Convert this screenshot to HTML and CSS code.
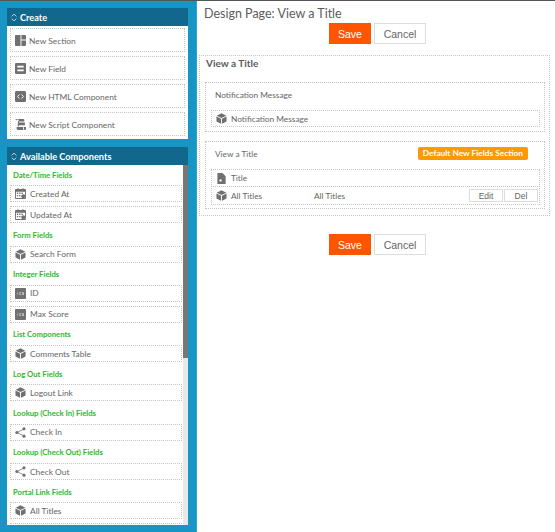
FILE: index.html
```html
<!DOCTYPE html>
<html lang="en">
<head>
<meta charset="utf-8">
<title>Design Page: View a Title</title>
<link rel="stylesheet" href="styles.css">
</head>
<body>
<svg class="defs" width="0" height="0" aria-hidden="true">
  <symbol id="cube" viewBox="0 0 12 12"><path d="M6 .3 11.300 3 6 5.400.7 3z"/><path d="M.5 3.800 5.500 6.200v5.500L.5 9.200z"/><path d="M11.500 3.800 6.500 6.200v5.500l5-2.500z"/></symbol>
  <symbol id="section" viewBox="0 0 12 12"><path d="M1 0h5v12H1a1 1 0 0 1-1-1V1a1 1 0 0 1 1-1z"/><path d="M7 0h4a1 1 0 0 1 1 1v4H7z"/><path d="M7 6h5v5a1 1 0 0 1-1 1H7z"/></symbol>
  <symbol id="field" viewBox="0 0 12 12"><path fill-rule="evenodd" d="M1 0h10a1 1 0 0 1 1 1v10a1 1 0 0 1-1 1H1a1 1 0 0 1-1-1V1a1 1 0 0 1 1-1zm1.500 3v2h7V3zm0 4v2h7V7z"/></symbol>
  <symbol id="html" viewBox="0 0 12 12"><rect width="12" height="12" rx="1.500"/><path d="M4.800 3.800 2.800 6l2 2.200M7.200 3.800l2 2.200-2 2.200" fill="none" stroke="#fff" stroke-width="1"/></symbol>
  <symbol id="script" viewBox="0 0 12 12"><path d="M.5 0h8.200c1 0 1.500.7 1.500 1.400V2.800H4.200V1.700C4.200 1 3.600.6 2.900.6 2 .6 1.500 1 1.300 1.900z"/><path d="M3.200 1.800h1v1.900h6.600v3.100H4.500V8H3z"/><path d="M1.800 8.800h7v1.700c0 .7.500 1.500 1.200 1.500H3.500C2.500 12 1.800 11 1.800 10z"/><path d="M9.700 8.800H12V10.800c0 .7-.5 1.200-1.100 1.200s-1.200-.5-1.200-1.200z"/></symbol>
  <symbol id="calendar" viewBox="0 0 12 12"><path fill-rule="evenodd" d="M1 1.200h1.800V0h1v1.200h4.400V0h1v1.200H11a1 1 0 0 1 1 1V11a1 1 0 0 1-1 1H1a1 1 0 0 1-1-1V2.200a1 1 0 0 1 1-1zM1 4v7h10V4z"/><path d="M2 5h1.500v1.500H2zM4.500 5H6v1.500H4.500zM7 5h1.500v1.500H7zM2 7.500h1.500V9H2zM4.500 7.500H6V9H4.500z"/><circle cx="9" cy="9" r="2.200"/></symbol>
  <symbol id="number" viewBox="0 0 12 12"><path fill-rule="evenodd" d="M1 0h10a1 1 0 0 1 1 1v10a1 1 0 0 1-1 1H1a1 1 0 0 1-1-1V1a1 1 0 0 1 1-1zm1.500 5v2H3V5zm2 0v.5H6v.5H4.500v1H6.500v-.5H5V6h1.500V5zm3 0v.5H9V6H8v.5h1V7H7.500v.5H9.500V5z"/></symbol>
  <symbol id="share" viewBox="0 0 12 12"><path d="M9.800 2.200 2.200 6l7.600 3.800" fill="none" stroke="currentColor" stroke-width=".8"/><circle cx="9.800" cy="2" r="1.700"/><circle cx="2" cy="6" r="1.700"/><circle cx="9.800" cy="10" r="1.700"/></symbol>
  <symbol id="file" viewBox="0 0 12 12"><path fill-rule="evenodd" d="M1.500 0H7l3.500 3.500V12h-9zm3.500 6.800a1.300 1.300 0 1 0 .01 0z"/></symbol>
</svg>

<div class="topline"></div>
<div class="layout">
  <aside class="sidebar">
    <section class="panel">
      <h2 class="panel-head"><svg class="chev" viewBox="0 0 8 12"><path d="M1 4.500 4 1.500l3 3M1 7.500l3 3 3-3"/></svg>Create</h2>
      <div class="create-body">
        <div class="item create"><svg class="ico"><use href="#section"/></svg>New Section</div>
        <div class="item create"><svg class="ico"><use href="#field"/></svg>New Field</div>
        <div class="item create"><svg class="ico"><use href="#html"/></svg>New HTML Component</div>
        <div class="item create"><svg class="ico"><use href="#script"/></svg>New Script Component</div>
      </div>
    </section>
    <section class="panel available">
      <h2 class="panel-head"><svg class="chev" viewBox="0 0 8 12"><path d="M1 4.500 4 1.500l3 3M1 7.500l3 3 3-3"/></svg>Available Components</h2>
      <div class="list">
        <h3 class="group">Date/Time Fields</h3>
        <div class="item"><svg class="ico"><use href="#calendar"/></svg>Created At</div>
        <div class="item"><svg class="ico"><use href="#calendar"/></svg>Updated At</div>
        <h3 class="group">Form Fields</h3>
        <div class="item"><svg class="ico"><use href="#cube"/></svg>Search Form</div>
        <h3 class="group">Integer Fields</h3>
        <div class="item"><svg class="ico"><use href="#number"/></svg>ID</div>
        <div class="item"><svg class="ico"><use href="#number"/></svg>Max Score</div>
        <h3 class="group">List Components</h3>
        <div class="item"><svg class="ico"><use href="#cube"/></svg>Comments Table</div>
        <h3 class="group">Log Out Fields</h3>
        <div class="item"><svg class="ico"><use href="#cube"/></svg>Logout Link</div>
        <h3 class="group">Lookup (Check In) Fields</h3>
        <div class="item"><svg class="ico"><use href="#share"/></svg>Check In</div>
        <h3 class="group">Lookup (Check Out) Fields</h3>
        <div class="item"><svg class="ico"><use href="#share"/></svg>Check Out</div>
        <h3 class="group">Portal Link Fields</h3>
        <div class="item"><svg class="ico"><use href="#cube"/></svg>All Titles</div>
        <div class="item"></div>
      </div>
      <div class="scroll-track"><div class="scroll-thumb"></div></div>
    </section>
  </aside>

  <main class="main">
    <h1 class="title">Design Page: View a Title</h1>
    <div class="actions">
      <button class="btn save">Save</button>
      <button class="btn cancel">Cancel</button>
    </div>
    <div class="page-box">
      <h2 class="page-name">View a Title</h2>
      <div class="section first">
        <div class="section-head">Notification Message</div>
        <div class="row"><svg class="ico"><use href="#cube"/></svg>Notification Message</div>
      </div>
      <div class="section second">
        <div class="section-head">View a Title<span class="badge">Default New Fields Section</span></div>
        <div class="rows">
          <div class="row tall"><svg class="ico"><use href="#file"/></svg>Title</div>
          <div class="row tall">
            <svg class="ico"><use href="#cube"/></svg><span class="row-name">All Titles</span><span class="row-label">All Titles</span>
            <button class="mini">Edit</button><button class="mini">Del</button>
          </div>
        </div>
      </div>
    </div>
    <div class="actions bottom">
      <button class="btn save">Save</button>
      <button class="btn cancel">Cancel</button>
    </div>
  </main>
</div>
</body>
</html>
```
FILE: styles.css
```css
* { box-sizing: border-box; }
html, body { height: 100%; }
body {
  margin: 0;
  overflow: hidden;
  background: #fff;
  color: #666;
  font-family: "Lato", "Liberation Sans", sans-serif;
  font-size: 8.4px;
}
.defs { display: block; height: 0; }
.topline { height: 1px; background: #555; }
.layout { display: flex; height: 531px; }

.sidebar {
  flex: none;
  width: 197px;
  padding: 7px 8px 0 7px;
  background: #1795c4;
  border-right: 1px solid #2aa5d8;
}
.panel { background: #fff; }
.panel-head {
  display: flex;
  align-items: center;
  gap: 3px;
  margin: 0;
  padding-left: 4px;
  height: 18px;
  background: #12688c;
  color: #fff;
  font-size: 9.2px;
  font-weight: 700;
}
.chev { width: 6px; height: 9px; fill: none; stroke: #fff; stroke-width: 1; }
.create-body { display: flex; flex-direction: column; gap: 4px; padding: 2px 3px 3px; }
.item {
  display: flex;
  align-items: center;
  height: 17px;
  border: 1px dotted #c4c4c4;
  padding-left: 4px;
  margin-bottom: 4px;
  color: #666;
  white-space: nowrap;
}
.item.create { height: 24px; margin: 0; padding-top: 1px; }
.ico { width: 11px; height: 11px; margin-right: 4px; fill: #707070; color: #707070; flex: none; }
.item.create .ico { margin-right: 3px; }

.available {
  position: relative;
  margin-top: 8px;
  height: 378px;
  display: flex;
  flex-direction: column;
}
.available .panel-head { flex: none; height: 18px; }
.list {
  flex: 1;
  overflow: hidden;
  padding: 2px 6px 0 3px;
  min-height: 0;
}
.scroll-track {
  position: absolute;
  top: 18px;
  right: 0;
  bottom: 0;
  width: 5px;
  background: #e8e8e8;
}
.scroll-thumb { height: 193px; background: #777; }
.group {
  margin: 0;
  height: 15.3px;
  padding: 1.5px 0 0 3px;
  color: #2eb82e;
  font-size: 7.7px;
  font-weight: 700;
  line-height: 13px;
  white-space: nowrap;
}
.group + .item { margin-top: 3px; }

.main { flex: 1; min-width: 0; padding: 0 5px 0 2px; }
.title {
  margin: 0;
  padding: 6px 0 0 5px;
  height: 22px;
  color: #5c5c5c;
  font-size: 12.5px;
  font-weight: 400;
  line-height: 14px;
}
.actions { display: flex; justify-content: center; gap: 3px; padding-left: 6px; }
.btn {
  width: 42px;
  height: 21px;
  padding: 0;
  border: 1px solid transparent;
  font-family: "Liberation Sans", sans-serif;
  font-size: 10.5px;
}
.save { background: #ff5500; color: #fff; }
.cancel { width: 52px; background: #fff; border-color: #ddd; color: #666; }
.bottom { margin-top: 18px; }

.page-box {
  margin-top: 11px;
  height: 161px;
  border: 1px dotted #c4c4c4;
  padding: 1px 4px 0 5px;
}
.page-name {
  margin: 0 0 0 1px;
  height: 25px;
  color: #5c5c5c;
  font-size: 10px;
  font-weight: 700;
  line-height: 12px;
}
.section { border: 1px dotted #c4c4c4; padding: 0 4px 0 5px; }
.section.first { height: 50px; margin-bottom: 9px; }
.section.second { height: 68px; }
.section-head {
  display: flex;
  align-items: center;
  justify-content: space-between;
  height: 27px;
  padding: 0 12px 4px 4px;
  color: #666;
  font-size: 8.3px;
}
.badge {
  padding: 0 5px;
  height: 13px;
  line-height: 13px;
  border-radius: 2px;
  background: #ff9900;
  color: #fff;
  font-size: 8.3px;
  font-weight: 700;
}
.row {
  display: flex;
  align-items: center;
  height: 17px;
  padding-left: 4px;
  border: 1px dotted #c4c4c4;
  font-size: 8.3px;
}
.row.tall { height: 18px; }
.row.tall + .row.tall { height: 19px; margin-top: -1px; }
.row-name { width: 83px; }
.row-label { flex: 1; }
.mini {
  width: 34px;
  height: 13px;
  padding: 0;
  margin-right: 1px;
  background: #fff;
  border: 1px solid #ddd;
  color: #666;
  font-family: "Liberation Sans", sans-serif;
  font-size: 8.5px;
}
```
